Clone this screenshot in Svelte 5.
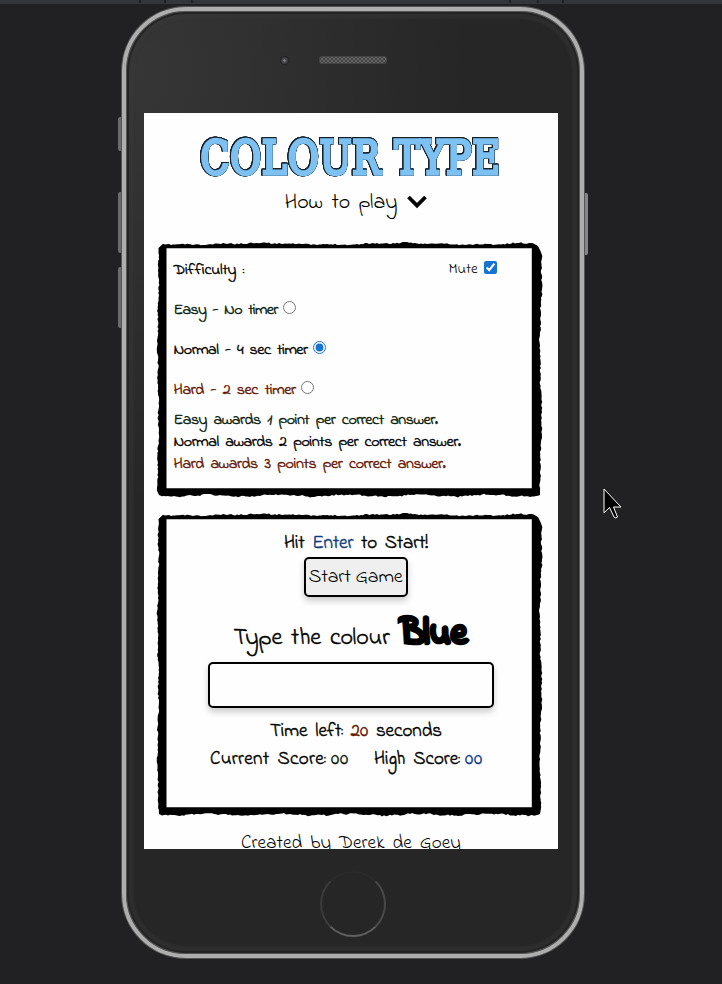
<script>
  let difficulty = $state('normal');
  let mute = $state(true);
  let answer = $state('');

  // Spreads the letters of a label so that it fills the given width.
  function fit(node, width) {
    const natural = node.getBoundingClientRect().width;
    const count = node.textContent.length;
    node.style.letterSpacing = (width - natural) / count + 'px';
  }

  // Brush-stroke frame: a ragged outer edge around a clean inner rectangle.
  function roughFrame(w, h) {
    let seed = 11;
    const rnd = () => {
      seed = (seed * 16807) % 2147483647;
      return seed / 2147483647;
    };
    const pts = [];
    const wob = (i, a) =>
      Math.sin(i * 0.045) * a + Math.sin(i * 0.17) * 0.4 + (rnd() - 0.5) * 1.3;
    for (let x = 6; x < w - 8; x += 2) pts.push([x, 0.8 + wob(x, 0.8)]);
    pts.push([w - 4, 3], [w - 1.5, 8]);
    for (let y = 11; y < h - 7; y += 2) pts.push([w - 1.2 + wob(y, 1), y]);
    pts.push([w - 2, h - 2]);
    for (let x = w - 4; x > 4; x -= 2) pts.push([x, h - 1.4 + wob(x * 2, 0.9)]);
    pts.push([2, h - 2]);
    for (let y = h - 6; y > 8; y -= 2) pts.push([1 + wob(y, 0.5), y]);
    pts.push([1.5, 5]);
    const outer = 'M' + pts.map((p) => p[0].toFixed(1) + ' ' + p[1].toFixed(1)).join('L') + 'Z';
    return outer + `M9.5 5.3V${h - 8.7}H${w - 10.2}V5.3Z`;
  }

  const levels = [
    { id: 'easy', label: 'Easy - No timer', width: 104 },
    { id: 'normal', label: 'Normal - 4 sec timer', width: 134 },
    { id: 'hard', label: 'Hard - 2 sec timer', width: 122 }
  ];
  const awards = [
    { id: 'easy', label: 'Easy awards 1 point per correct answer.', width: 264 },
    { id: 'normal', label: 'Normal awards 2 points per correct answer.', width: 287 },
    { id: 'hard', label: 'Hard awards 3 points per correct answer.', width: 272 }
  ];
</script>

<div class="desk">
  <div class="toolbar"><i></i><i></i><i></i><i></i><i></i><i></i></div>
  <div class="phone">
    <b class="key k1"></b><b class="key k2"></b><b class="key k3"></b><b class="key k4"></b>
    <div class="bezel">
      <span class="camera"></span>
      <svg class="speaker" width="68" height="8" viewBox="0 0 68 8">
        <defs>
          <pattern id="mesh" width="4" height="4" patternUnits="userSpaceOnUse">
            <rect width="4" height="4" fill="#424242" />
            <rect width="2" height="2" fill="#666" /><rect x="2" y="2" width="2" height="2" fill="#666" />
          </pattern>
        </defs>
        <rect x=".5" y=".5" width="67" height="7" rx="2" fill="url(#mesh)" stroke="#444" />
      </svg>
    </div>
    <main class="screen">
      <h1><span use:fit={303}>COLOUR TYPE</span></h1>
      <div class="how">
        <span use:fit={113}>How to play</span>
        <svg width="20" height="14" viewBox="0 0 20 14"><path d="M1.5 2l8.5 8.5L18.500 2" fill="none" stroke="#000" stroke-width="3.8" /></svg>
      </div>

      <section class="card settings">
        <svg class="frame" width="385" height="253"><path d={roughFrame(385, 254)} fill-rule="evenodd" /></svg>
        <div class="row head">
          <span use:fit={65}>Difficulty :</span>
          <label class="mute"><span use:fit={29}>Mute</span><input type="checkbox" bind:checked={mute} /></label>
        </div>
        {#each levels as level}
          <label class="row {level.id}">
            <span use:fit={level.width}>{level.label}</span>
            <input type="radio" name="level" value={level.id} bind:group={difficulty} />
          </label>
        {/each}
        {#each awards as award}
          <p class="award {award.id}"><span use:fit={award.width}>{award.label}</span></p>
        {/each}
      </section>

      <section class="card game">
        <svg class="frame" width="385" height="302"><path d={roughFrame(385, 302)} fill-rule="evenodd" /></svg>
        <p class="hit"><span use:fit={144}>Hit <em class="blue">Enter</em> to Start!</span></p>
        <button><span use:fit={94}>Start Game</span></button>
        <p class="type"><span use:fit={156}>Type the colour</span><strong use:fit={67}>Blue</strong></p>
        <input class="answer" type="text" bind:value={answer} aria-label="Answer" />
        <p class="line"><span use:fit={172}>Time left: <em class="red">20</em> seconds</span></p>
        <p class="line scores">
          <span use:fit={116}>Current Score:</span><span class="zero easy" use:fit={18}>00</span>
          <span class="high" use:fit={86}>High Score:</span><span class="zero blue" use:fit={18}>00</span>
        </p>
      </section>
      <footer><span use:fit={220}>Created by Derek de Goey</span></footer>
    </main>
    <div class="home"></div>
  </div>
  <svg class="cursor" width="20" height="33" viewBox="0 0 20 33">
    <path d="M1 1v24l5.5-5.5L11 29q1.5 2 3.500 0l-4-10H18Z" fill="#000" stroke="#fff" stroke-width="1" />
  </svg>
</div>

<style>
  :global(body) { background: #212123; }
  .desk {
    position: relative;
    box-sizing: border-box;
    width: 722px;
    height: 984px;
    overflow: hidden;
    background: #212123;
    font-family: 'Indie Flower', Lato, sans-serif;
    color: #000;
  }
  .toolbar { height: 4px; background: #35363a; position: relative; }
  .toolbar i { position: absolute; top: 0; width: 2px; height: 3px; background: #202124; left: 139px; }
  .toolbar i:nth-child(2) { left: 164px; }
  .toolbar i:nth-child(3) { left: 191px; }
  .toolbar i:nth-child(4) { left: 509px; }
  .toolbar i:nth-child(5) { left: 537px; }
  .toolbar i:nth-child(6) { left: 562px; }
  .phone {
    position: relative;
    box-sizing: border-box;
    width: 462px;
    height: 951px;
    margin: 3px 0 0 122px;
    border: 4px solid #aeaeae;
    border-radius: 64px;
    background: radial-gradient(ellipse 330px 430px at 10px 60px, #363636, #262626);
    box-shadow: 0 0 0 1px #555, inset 0 0 0 1px #555, inset 0 0 0 3px #242424, inset 0 0 2px 8px rgba(58, 58, 58, .4);
    display: flex;
    flex-direction: column;
    align-items: center;
  }
  .key { position: absolute; width: 3px; left: -8px; background: #6b6b6b; border-radius: 2px 0 0 2px; }
  .k1 { top: 106px; height: 34px; }
  .k2 { top: 181px; height: 61px; }
  .k3 { top: 256px; height: 61px; }
  .k4 { left: auto; right: -8px; top: 182px; height: 62px; border-radius: 0 2px 2px 0; background: #858585; }
  .bezel { position: relative; width: 100%; height: 102px; flex: none; }
  .camera {
    position: absolute; left: 154px; top: 45px; width: 9px; height: 9px; border-radius: 50%;
    background: radial-gradient(circle, #777 0 1px, #4a4a4e 1.5px 2.3px, #1b1b1b 4.5px);
    box-shadow: 0 -2px 2px #303030;
  }
  .speaker { position: absolute; left: 193px; top: 45px; }
  .screen {
    width: 414px;
    height: 736px;
    flex: none;
    margin-left: -4px;
    overflow: hidden;
    background: #fefefe;
    display: flex;
    flex-direction: column;
    align-items: center;
  }
  span { white-space: nowrap; }
  h1 {
    margin: 13px 0 0;
    width: 414px;
    height: 61px;
    flex: none;
    display: flex;
    justify-content: center;
    font: normal 47px/64px 'Special Elite', 'DejaVu Serif', serif;
    color: #7dc1f2;
    -webkit-text-stroke: 3.6px #7dc1f2;
    filter: drop-shadow(.7px 0 0 #14202a) drop-shadow(-.7px 0 0 #14202a) drop-shadow(0 .7px 0 #14202a) drop-shadow(0 -.7px 0 #14202a);
  }
  h1 span { transform: scaleX(.8); }
  .how { display: flex; align-items: center; height: 30px; flex: none; font-size: 22px; line-height: 28px; gap: 9px; padding-left: 9px; word-spacing: 3px; }
  .how svg { width: 20px; height: 14px; }
  .how span { padding-top: 2px; }
  .card { position: relative; width: 385px; box-sizing: border-box; flex: none; margin-left: -4px; }
  .frame { position: absolute; left: 0; top: 0; pointer-events: none; overflow: visible; }
  .settings { height: 253px; margin-top: 26px; padding: 5px 0 0 17px; }
  .row { display: flex; align-items: center; height: 40px; font-size: 16px; gap: 5px; }
  .row > span { padding-top: 3px; }
  .row, .award, .hit, .line, .type > span { -webkit-text-stroke: .45px currentColor; word-spacing: 3px; }
  .row input { margin: 0 0 1px; width: 13px; height: 13px; accent-color: #1673d1; }
  .head { justify-content: space-between; padding-right: 45px; }
  .mute { display: flex; align-items: center; gap: 6px; font-size: 15px; -webkit-text-stroke: 0; }
  .mute span { padding-top: 2px; }
  .award { margin: 0; height: 22px; line-height: 24px; font-size: 16px; }
  .easy { color: #071a07; }
  .normal { color: #000; }
  .hard, .red { color: #651400; }
  .blue { color: #0b3c80; }
  em { font-style: normal; }
  .game { height: 302px; margin-top: 18px; padding-top: 17px; display: flex; flex-direction: column; align-items: center; }
  .game p { margin: 0; white-space: nowrap; }
  .hit { height: 26px; line-height: 26px; font-size: 19px; padding-left: 14px; }
  button {
    box-sizing: border-box; width: 104px; height: 40px; padding: 0; margin-left: 13px;
    border: 2px solid #000; border-radius: 5px; background: #efefef;
    font: 300 20px/37px 'Indie Flower', Lato, sans-serif; color: #000;
    box-shadow: 0 4px 6px rgba(0, 0, 0, .2);
  }
  .type { display: flex; height: 65px; align-items: center; line-height: 40px; font-size: 24px; padding-left: 3px; }
  .type > span { padding-top: 19px; }
  .type strong { margin-left: 11px; padding-top: 10px; font-size: 36px; font-weight: 700; line-height: 40px; -webkit-text-stroke: 3.6px #000; }
  .answer {
    box-sizing: border-box; width: 286px; height: 46px; border: 2px solid #000; border-radius: 5px;
    background: #fefefe; margin: 0 0 0 3px; box-shadow: 0 4px 6px rgba(0, 0, 0, .2);
    font: 20px Lato, sans-serif; padding: 0 10px;
  }
  .line { height: 28px; line-height: 31px; font-size: 19px; }
  .answer + .line { margin-top: 8px; padding-left: 14px; }
  .game .scores { display: flex; margin-left: -5px; }
  .zero { font-size: 19px; margin-left: 5px; }
  .high { margin-left: 25px; }
  footer { margin-top: 12px; height: 28px; flex: none; font-size: 19px; line-height: 32px; word-spacing: 3px; }
  .home {
    position: absolute; left: 194px; top: 860px; width: 66px; height: 66px; box-sizing: border-box;
    border-radius: 50%; border: 2px solid #2a2a2a;
    border-left-color: #3c3c3c; border-bottom-color: #606060; border-right-color: #4a4a4a;
  }
  .cursor { position: absolute; left: 603px; top: 488px; }
</style>
